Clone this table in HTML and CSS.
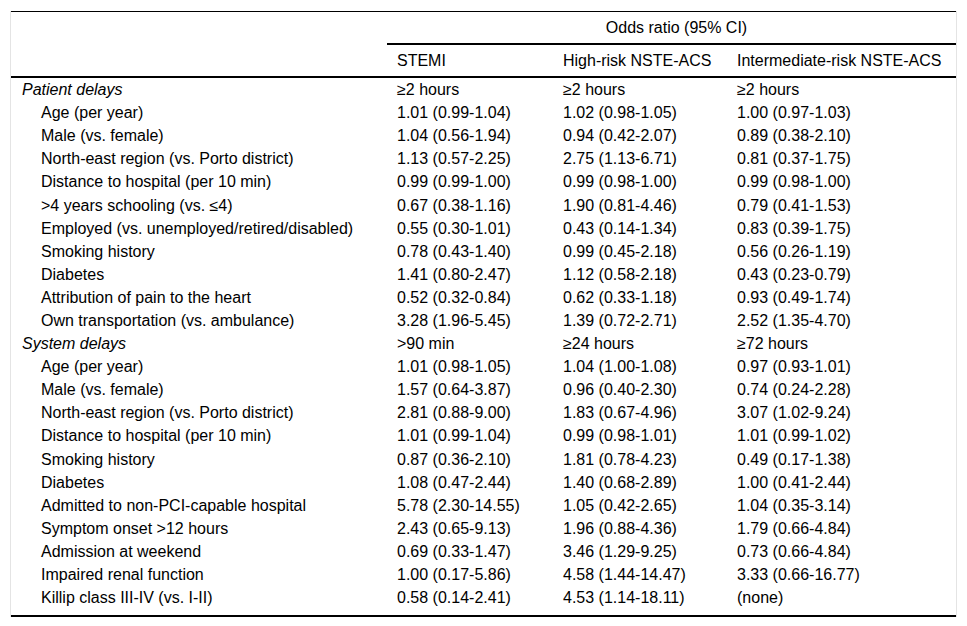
FILE: index.html
```html
<!DOCTYPE html>
<html>
<head>
<meta charset="utf-8">
<link rel="stylesheet" href="styles.css">
</head>
<body>
<div class="frame">
<table class="or-table">
  <colgroup>
    <col class="c1"><col class="c2"><col class="c3"><col class="c4">
  </colgroup>
  <thead>
    <tr>
      <th class="blank" rowspan="2"></th>
      <th class="span" colspan="3">Odds ratio (95% CI)</th>
    </tr>
    <tr>
      <th class="sub">STEMI</th>
      <th class="sub">High-risk NSTE-ACS</th>
      <th class="sub">Intermediate-risk NSTE-ACS</th>
    </tr>
  </thead>
  <tbody>
    <tr class="group"><td class="lab"><em>Patient delays</em></td><td>≥2 hours</td><td>≥2 hours</td><td>≥2 hours</td></tr>
    <tr><td class="item">Age (per year)</td><td>1.01 (0.99-1.04)</td><td>1.02 (0.98-1.05)</td><td>1.00 (0.97-1.03)</td></tr>
    <tr><td class="item">Male (vs. female)</td><td>1.04 (0.56-1.94)</td><td>0.94 (0.42-2.07)</td><td>0.89 (0.38-2.10)</td></tr>
    <tr><td class="item">North-east region (vs. Porto district)</td><td>1.13 (0.57-2.25)</td><td>2.75 (1.13-6.71)</td><td>0.81 (0.37-1.75)</td></tr>
    <tr><td class="item">Distance to hospital (per 10 min)</td><td>0.99 (0.99-1.00)</td><td>0.99 (0.98-1.00)</td><td>0.99 (0.98-1.00)</td></tr>
    <tr><td class="item">&gt;4 years schooling (vs. ≤4)</td><td>0.67 (0.38-1.16)</td><td>1.90 (0.81-4.46)</td><td>0.79 (0.41-1.53)</td></tr>
    <tr><td class="item">Employed (vs. unemployed/retired/disabled)</td><td>0.55 (0.30-1.01)</td><td>0.43 (0.14-1.34)</td><td>0.83 (0.39-1.75)</td></tr>
    <tr><td class="item">Smoking history</td><td>0.78 (0.43-1.40)</td><td>0.99 (0.45-2.18)</td><td>0.56 (0.26-1.19)</td></tr>
    <tr><td class="item">Diabetes</td><td>1.41 (0.80-2.47)</td><td>1.12 (0.58-2.18)</td><td>0.43 (0.23-0.79)</td></tr>
    <tr><td class="item">Attribution of pain to the heart</td><td>0.52 (0.32-0.84)</td><td>0.62 (0.33-1.18)</td><td>0.93 (0.49-1.74)</td></tr>
    <tr><td class="item">Own transportation (vs. ambulance)</td><td>3.28 (1.96-5.45)</td><td>1.39 (0.72-2.71)</td><td>2.52 (1.35-4.70)</td></tr>
    <tr class="group"><td class="lab"><em>System delays</em></td><td>&gt;90 min</td><td>≥24 hours</td><td>≥72 hours</td></tr>
    <tr><td class="item">Age (per year)</td><td>1.01 (0.98-1.05)</td><td>1.04 (1.00-1.08)</td><td>0.97 (0.93-1.01)</td></tr>
    <tr><td class="item">Male (vs. female)</td><td>1.57 (0.64-3.87)</td><td>0.96 (0.40-2.30)</td><td>0.74 (0.24-2.28)</td></tr>
    <tr><td class="item">North-east region (vs. Porto district)</td><td>2.81 (0.88-9.00)</td><td>1.83 (0.67-4.96)</td><td>3.07 (1.02-9.24)</td></tr>
    <tr><td class="item">Distance to hospital (per 10 min)</td><td>1.01 (0.99-1.04)</td><td>0.99 (0.98-1.01)</td><td>1.01 (0.99-1.02)</td></tr>
    <tr><td class="item">Smoking history</td><td>0.87 (0.36-2.10)</td><td>1.81 (0.78-4.23)</td><td>0.49 (0.17-1.38)</td></tr>
    <tr><td class="item">Diabetes</td><td>1.08 (0.47-2.44)</td><td>1.40 (0.68-2.89)</td><td>1.00 (0.41-2.44)</td></tr>
    <tr><td class="item">Admitted to non-PCI-capable hospital</td><td>5.78 (2.30-14.55)</td><td>1.05 (0.42-2.65)</td><td>1.04 (0.35-3.14)</td></tr>
    <tr><td class="item">Symptom onset &gt;12 hours</td><td>2.43 (0.65-9.13)</td><td>1.96 (0.88-4.36)</td><td>1.79 (0.66-4.84)</td></tr>
    <tr><td class="item">Admission at weekend</td><td>0.69 (0.33-1.47)</td><td>3.46 (1.29-9.25)</td><td>0.73 (0.66-4.84)</td></tr>
    <tr><td class="item">Impaired renal function</td><td>1.00 (0.17-5.86)</td><td>4.58 (1.44-14.47)</td><td>3.33 (0.66-16.77)</td></tr>
    <tr class="last"><td class="item">Killip class III-IV (vs. I-II)</td><td>0.58 (0.14-2.41)</td><td>4.53 (1.14-18.11)</td><td>(none)</td></tr>
  </tbody>
</table>
</div>
</body>
</html>
```

FILE: styles.css
```css
html, body {
  margin: 0;
  padding: 0;
  background: #fff;
}

body {
  font-family: "Liberation Sans", Arial, sans-serif;
  font-size: 16px;
  color: #000;
}

.frame {
  margin: 11px 0 0 10px;
  width: 945px;
  border-left: 1px solid #e4e4e4;
  border-right: 1px solid #e4e4e4;
}

.or-table {
  width: 945px;
  table-layout: fixed;
  border-collapse: separate;
  border-spacing: 0;
  border-top: 1px solid #000;
  border-bottom: 2px solid #000;
}

.c1 { width: 376px; }
.c2 { width: 166px; }
.c3 { width: 174px; }
.c4 { width: 229px; }

.or-table th {
  font-weight: normal;
  text-align: left;
  padding: 0 0 0 10px;
  height: 31px;
  line-height: 19px;
  vertical-align: middle;
}

.or-table th.span {
  text-align: center;
  border-bottom: 2px solid #000;
}

.or-table th.sub {
  border-bottom: 2px solid #000;
}

.or-table th.blank {
  border-bottom: 2px solid #000;
}

.or-table td {
  padding: 0 0 0 10px;
  height: 23.1px;
  line-height: 19px;
  vertical-align: middle;
  white-space: nowrap;
}

.or-table td.lab {
  padding-left: 11px;
}

.or-table td.item {
  padding-left: 30px;
}

.or-table tr.last td {
  padding-bottom: 6px;
}
```
